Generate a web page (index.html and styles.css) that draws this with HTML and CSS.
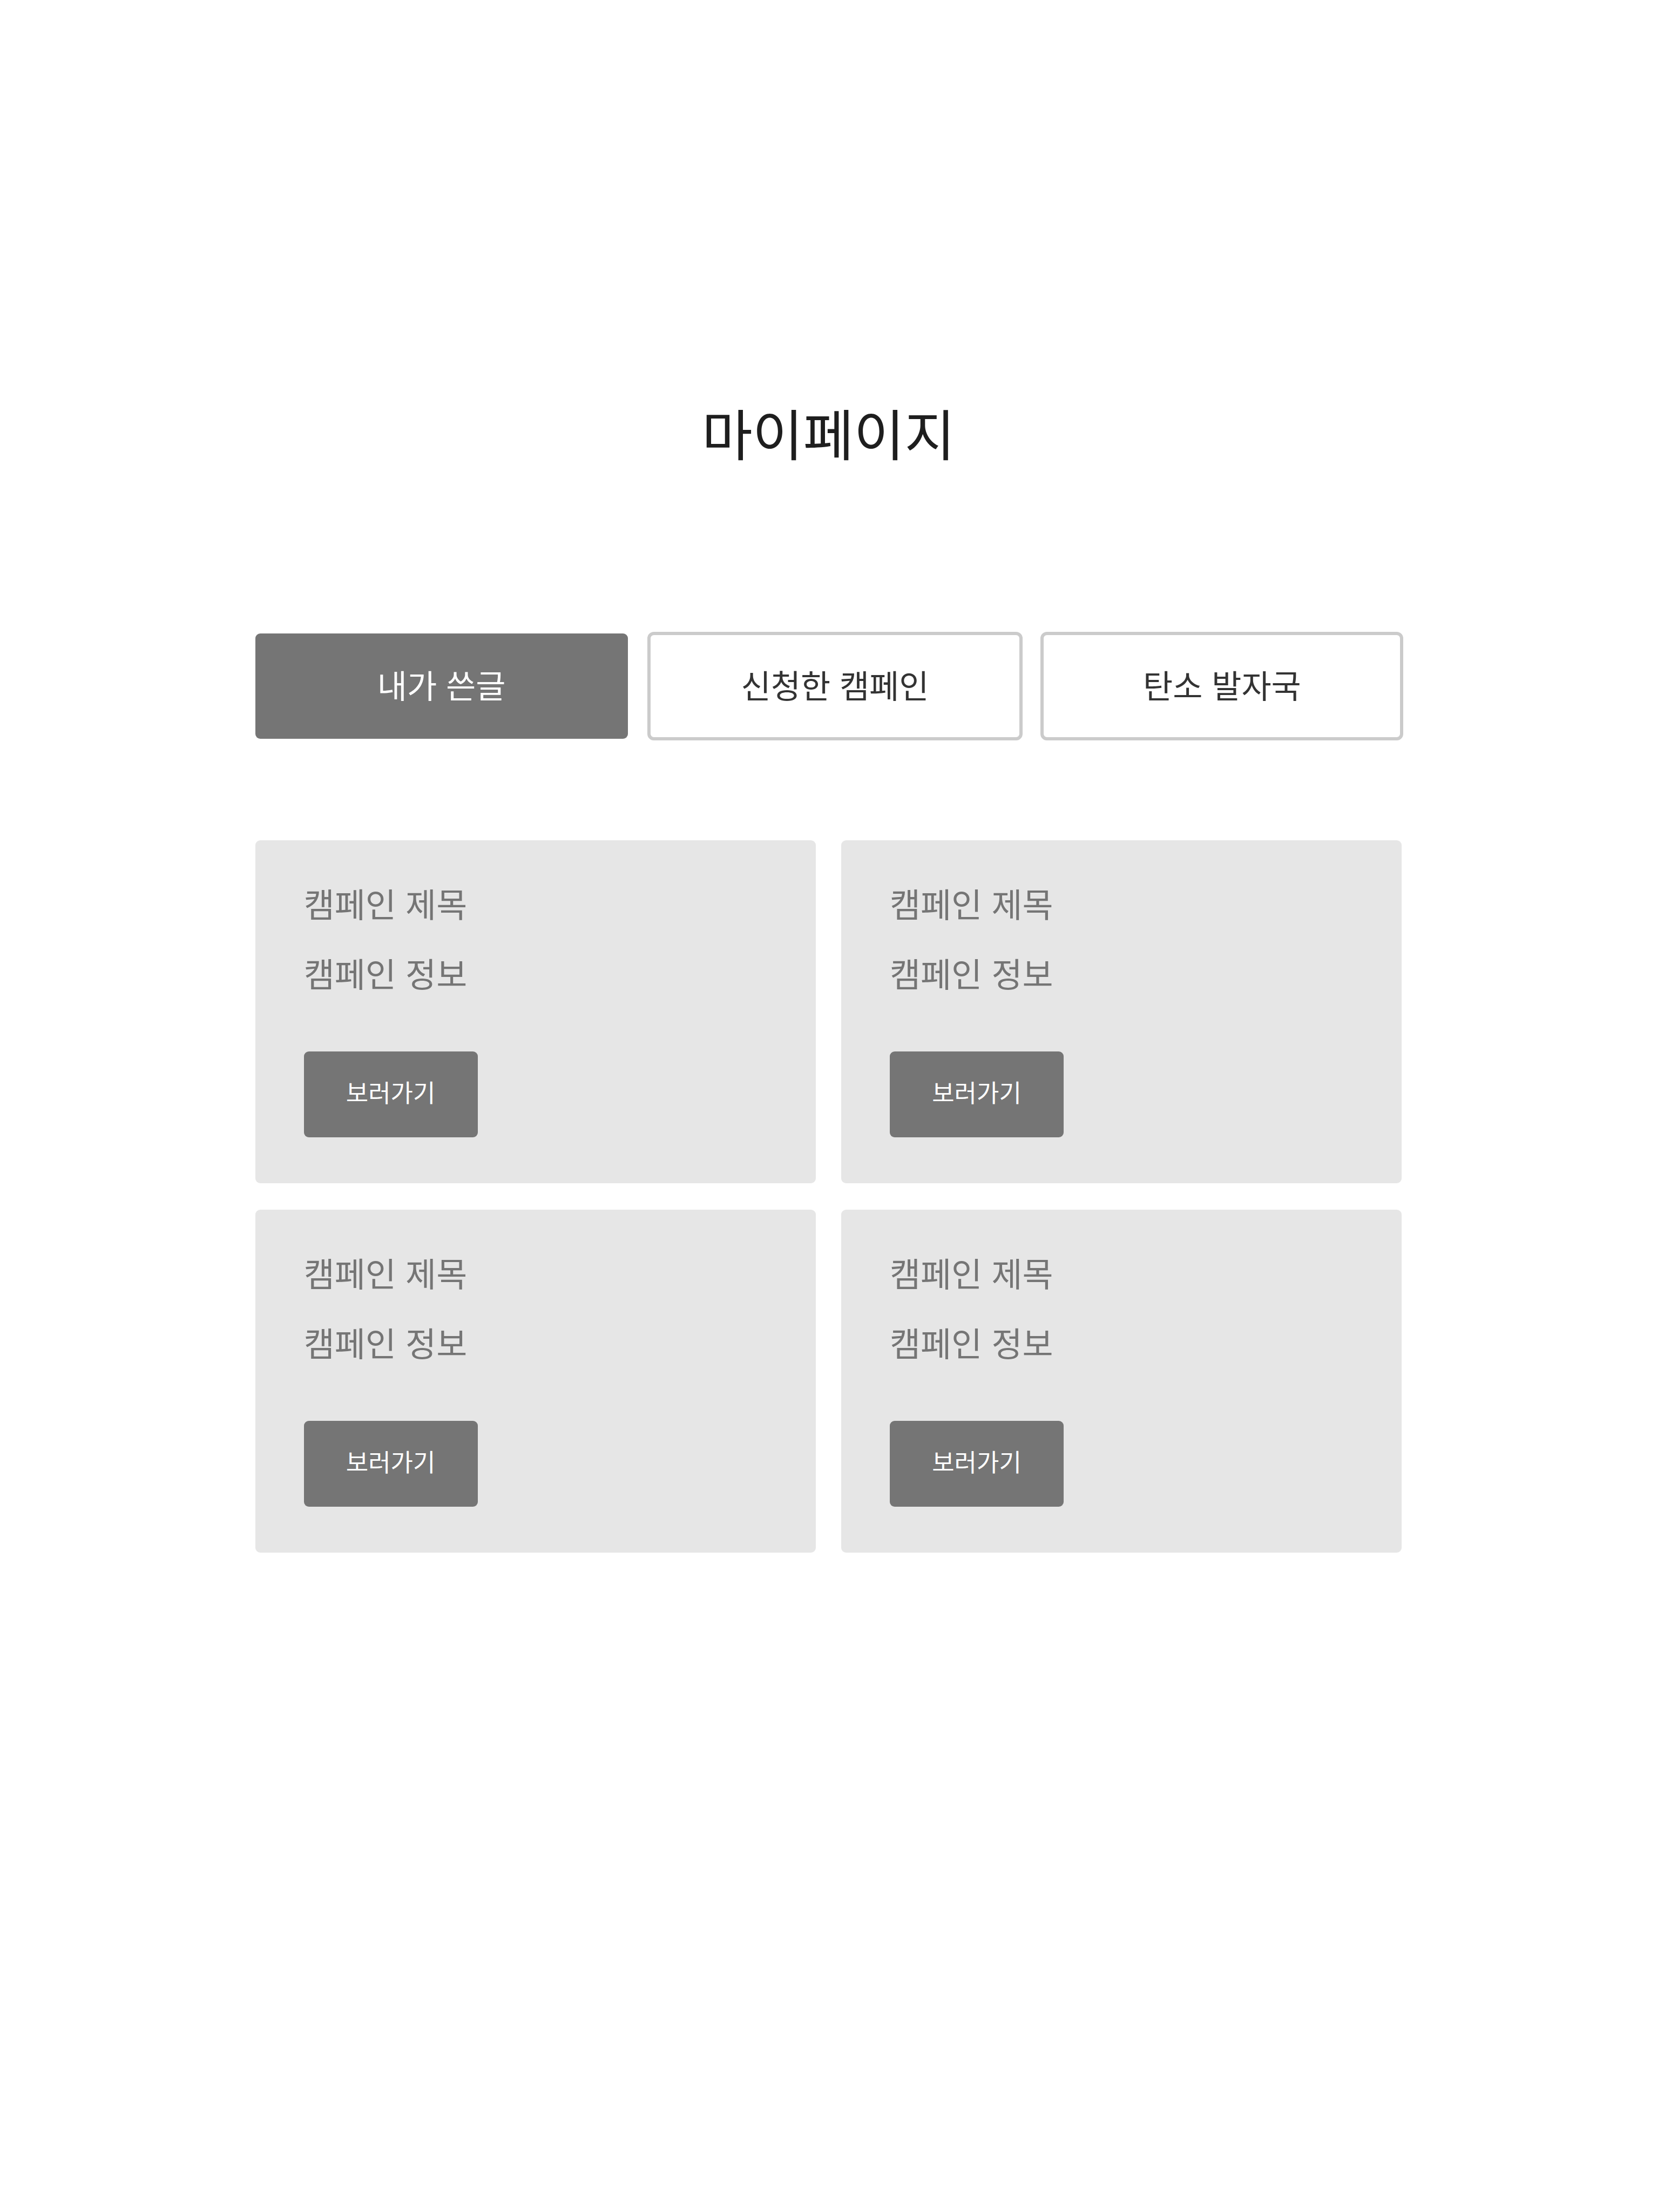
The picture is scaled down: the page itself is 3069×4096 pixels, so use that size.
FILE: index.html
```html
<!DOCTYPE html>
<html lang="ko">
<head>
<meta charset="utf-8">
<meta name="viewport" content="width=device-width, initial-scale=1">
<title>마이페이지</title>
<link rel="stylesheet" href="styles.css">
</head>
<body>
<main class="page">
  <h1 class="page-title">마이페이지</h1>
  <nav class="tabs" aria-label="마이페이지">
    <button type="button" class="tab tab-active" aria-current="page">내가 쓴글</button>
    <button type="button" class="tab">신청한 캠페인</button>
    <button type="button" class="tab">탄소 발자국</button>
  </nav>
  <section class="cards">
    <article class="card">
      <h2 class="card-text">캠페인 제목</h2>
      <p class="card-text">캠페인 정보</p>
      <button type="button" class="card-button">보러가기</button>
    </article>
    <article class="card">
      <h2 class="card-text">캠페인 제목</h2>
      <p class="card-text">캠페인 정보</p>
      <button type="button" class="card-button">보러가기</button>
    </article>
    <article class="card">
      <h2 class="card-text">캠페인 제목</h2>
      <p class="card-text">캠페인 정보</p>
      <button type="button" class="card-button">보러가기</button>
    </article>
    <article class="card">
      <h2 class="card-text">캠페인 제목</h2>
      <p class="card-text">캠페인 정보</p>
      <button type="button" class="card-button">보러가기</button>
    </article>
  </section>
</main>
</body>
</html>
```

FILE: styles.css
```css
* {
  box-sizing: border-box;
}

body {
  margin: 0;
  min-height: 100vh;
  background: #fff;
  color: #1e1e1e;
  font-family: "Noto Sans CJK KR", sans-serif;
  font-weight: 400;
}

button {
  border: 0;
  font: inherit;
  cursor: pointer;
}

.page {
  padding: 725px 15.4% 200px;
}

.page-title {
  margin: 0 0 298px;
  font-size: 102px;
  font-weight: 400;
  line-height: 150px;
  text-align: center;
}

.tabs {
  display: grid;
  grid-template-columns: 690fr 690fr 666fr;
  gap: 39px;
  margin-bottom: 188px;
}

.tab {
  padding: 48px 24px 55px;
  border-radius: 9px;
  outline: 6px solid #cbcbcb;
  outline-offset: -3px;
  background: #fff;
  color: #333;
  font-size: 60px;
  line-height: 92px;
}

.tab-active {
  outline: 0;
  background: #757575;
  color: #fff;
}

.cards {
  display: grid;
  grid-template-columns: 1fr 1fr;
  gap: 49px 47px;
}

.card {
  padding: 52px 90px 85px;
  border-radius: 9px;
  background: #e6e6e6;
}

.card-text {
  margin: 0;
  color: #757575;
  font-size: 62px;
  font-weight: 400;
  line-height: 129px;
}

.card-button {
  display: block;
  min-width: 322px;
  margin-top: 81px;
  padding: 41px 48px 50px;
  border-radius: 9px;
  background: #757575;
  color: #fff;
  font-size: 45px;
  line-height: 68px;
}
```
